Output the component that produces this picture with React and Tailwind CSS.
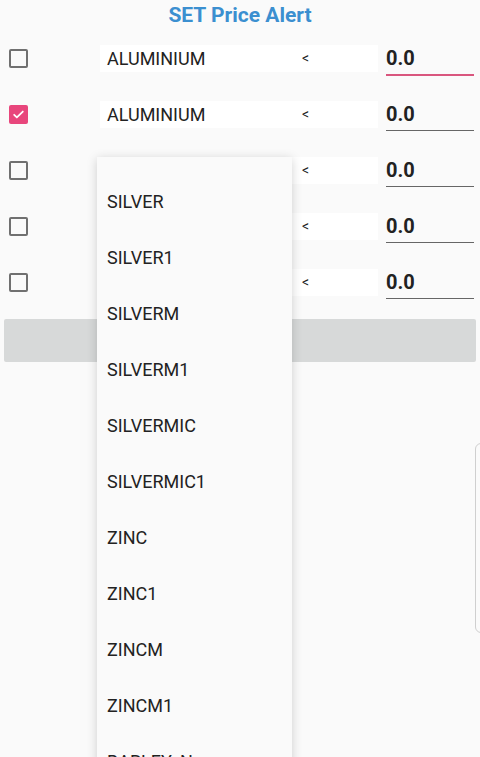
import React from 'react'

const rows = [false, true, false, false, false]
const menu = ['SILVER', 'SILVER1', 'SILVERM', 'SILVERM1', 'SILVERMIC', 'SILVERMIC1', 'ZINC', 'ZINC1', 'ZINCM', 'ZINCM1', 'BARLEY_N']

const Check = ({ on }) =>
    on ? (
        <div className="w-[19px] h-[19px] rounded-[2px] bg-[#e8467c] flex items-center justify-center">
            <svg width="13" height="13" viewBox="0 0 24 24" fill="none" stroke="white" strokeWidth="3.2" strokeLinecap="round" strokeLinejoin="round">
                <path d="M4 12.5l5 5L20 6.5" />
            </svg>
        </div>
    ) : (
        <div className="w-[19px] h-[19px] rounded-[2px] border-2 border-[#707070]"></div>
    )

export default function App() {
    return (
        <div className="relative w-[480px] h-[757px] overflow-hidden bg-[#fafafa] font-['Roboto',sans-serif]">
            {/* title */}
            <div className="h-[30px] flex items-center justify-center">
                <h1 className="text-[21px] font-bold text-[#3b8fd0] leading-none">SET Price Alert</h1>
            </div>

            {/* alert rows */}
            {rows.map((on, i) => (
                <div key={i} className="h-[56px] flex items-center">
                    <div className="w-[100px] pl-[9px]">
                        <Check on={on} />
                    </div>
                    <div className="w-[192px] h-[27px] bg-white flex items-center px-[7px] text-[18px] text-[#222]">
                        {i < 2 ? 'ALUMINIUM' : ''}
                    </div>
                    <div className="w-[86px] h-[27px] bg-white flex items-center pl-[10px] text-[14px] text-[#222]">&lt;</div>
                    <div className="ml-[8px] w-[88px] h-[32px] relative flex items-center">
                        <span className="text-[20px] font-bold text-[#222]">0.0</span>
                        {i === 0 ? (
                            <div className="absolute left-0 right-0 bottom-[-2px] h-[2px] bg-[#d9567e]"></div>
                        ) : (
                            <div className="absolute left-0 right-0 bottom-[-1px] h-[1px] bg-[#666]"></div>
                        )}
                    </div>
                </div>
            ))}

            {/* button */}
            <div className="mx-[4px] mt-[9px] h-[43px] bg-[#d7d9d9] rounded-[2px]"></div>

            {/* right edge handle */}
            <div className="absolute left-[475px] top-[443px] w-[12px] h-[190px] rounded-l-[6px] border border-[#cfcfcf] bg-[#fafafa]"></div>

            {/* dropdown popup */}
            <div className="absolute left-[97px] top-[157px] w-[195px] h-[700px] bg-[#fafafa] shadow-[0_2px_10px_rgba(0,0,0,0.18)] pt-[16px]">
                {menu.map((m) => (
                    <div key={m} className="h-[56px] flex items-center px-[10px] text-[18px] text-[#222]">{m}</div>
                ))}
            </div>
        </div>
    )
}
